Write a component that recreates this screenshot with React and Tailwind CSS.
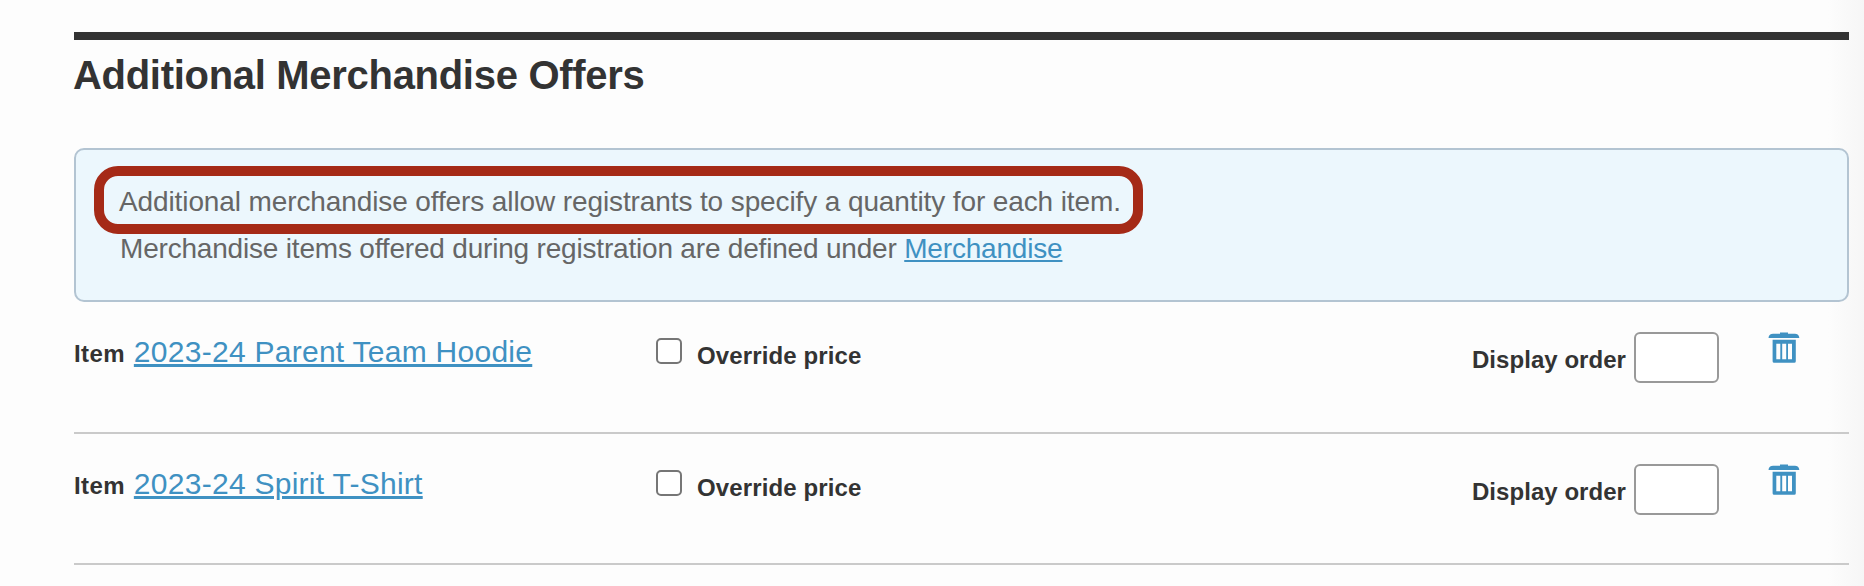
import React from 'react';

const items = [
  { id: 1, name: '2023-24 Parent Team Hoodie', height: 'h-[132px]' },
  { id: 2, name: '2023-24 Spirit T-Shirt', height: 'h-[131px]' },
];

function TrashIcon() {
  return (
    <svg width="32" height="31" viewBox="0 0 32 31" fill="#3f91c2">
      <path d="M0.6 6V5Q1.6 1.8 5 1.8H12V0.4H20V1.8H27Q30.2 1.8 31.2 5V6Z" />
      <path
        fillRule="evenodd"
        d="M4.6 7.7H27.8V29.2Q27.8 30.8 26.2 30.8H6.2Q4.6 30.8 4.6 29.2ZM8.3 11.7V27.2H12.3V11.7ZM14.2 11.7V27.2H18.2V11.7ZM20 11.7V27.2H24V11.7Z"
      />
    </svg>
  );
}

function OfferRow({ item }) {
  return (
    <div className={`flex items-start border-b-2 border-[#cacaca] ${item.height}`}>
      {/* Item name */}
      <div className="w-[582px] pt-8 leading-9 whitespace-nowrap">
        <span className="text-2xl leading-9 font-bold tracking-[0.45px]">Item</span>
        <a
          href="#"
          className="ml-[8.7px] text-[30px] leading-9 tracking-[0.27px] text-[#3f91c2] underline decoration-[3px] underline-offset-[2px]"
        >
          {item.name}
        </a>
      </div>

      {/* Override price */}
      <label className="flex items-start">
        <input
          type="checkbox"
          className="mt-9 h-[26px] w-[26px] appearance-none rounded-[5px] border-2 border-[#767676] bg-white"
        />
        <span className="mt-10 ml-[15px] text-2xl leading-7 font-bold tracking-[0.12px]">Override price</span>
      </label>

      {/* Display order */}
      <label className="ml-auto flex items-start">
        <span className="mt-11 mr-2 text-2xl leading-7 font-bold tracking-[0.05px]">Display order</span>
        <input
          type="text"
          className="mt-[30px] h-[51px] w-[85px] rounded-md border-2 border-[#999] bg-white px-2 text-2xl"
        />
      </label>
      <button className="mt-[30px] mr-[49px] ml-[49px]" aria-label="Delete">
        <TrashIcon />
      </button>
    </div>
  );
}

function App() {
  return (
    <div className="relative h-[586px] w-[1864px] overflow-hidden bg-[#fdfdfd] pt-8 pr-[15px] pl-[74px] font-['Liberation_Sans',Arial,sans-serif] text-[#333]">
      {/* Soft shade along the right side */}
      <div className="absolute inset-y-0 right-0 w-9 bg-linear-to-r from-[#fdfdfd] to-[#f6f6f6]"></div>

      <div className="relative">
        <h2 className="border-t-8 border-[#333] pt-[11px] -indent-px text-[40px] leading-[48px] font-bold tracking-[-0.3px]">
          Additional Merchandise Offers
        </h2>

        <div className="relative mt-[49px] h-[154px] rounded-[10px] border-2 border-[#b3c4d2] bg-[#ecf7fd] pt-7 pl-11 text-[28px] leading-[47px] text-[#666]">
          <p className="-indent-px tracking-[-0.11px]">
            Additional merchandise offers allow registrants to specify a quantity for each item.
          </p>
          <p className="tracking-[-0.19px]">
            Merchandise items offered during registration are defined under{' '}
            <a href="#" className="text-[#3f91c2] underline decoration-2 underline-offset-[2px]">
              Merchandise
            </a>
          </p>
          <div className="pointer-events-none absolute top-4 left-[18px] h-[68px] w-[1049px] rounded-[24px] border-[10px] border-[#a52a17]"></div>
        </div>

        {items.map((item) => (
          <OfferRow key={item.id} item={item} />
        ))}
      </div>
    </div>
  );
}

export default App;
